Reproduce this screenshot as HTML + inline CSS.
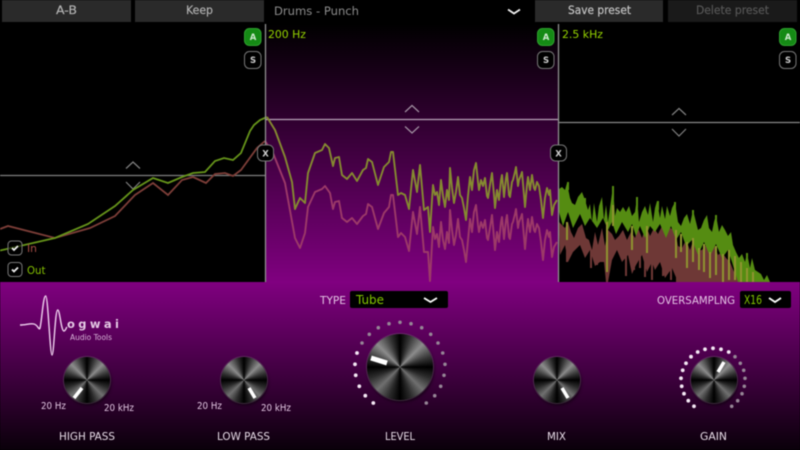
<!DOCTYPE html>
<html><head><meta charset="utf-8">
<style>
html,body{margin:0;padding:0;background:#000;width:800px;height:450px;overflow:hidden}
#w{position:relative;width:800px;height:450px;overflow:hidden;filter:blur(.5px)}
svg{position:absolute;left:0;top:0}
text{font-family:"DejaVu Sans","Liberation Sans",sans-serif}
.k{position:absolute;border-radius:50%;box-shadow:0 0 0 1px rgba(140,140,140,.3),1px 2px 3px rgba(0,0,0,.6);
background:conic-gradient(#000 0deg,#333 18deg,#8c8c8c 45deg,#333 72deg,#000 90deg,#2a2a2a 110deg,#707070 135deg,#2a2a2a 160deg,#000 180deg,#2a2a2a 200deg,#707070 225deg,#2a2a2a 250deg,#000 270deg,#333 288deg,#8c8c8c 315deg,#333 342deg,#000 360deg)}
</style></head><body><div id="w">
<svg width="800" height="450" viewBox="0 0 800 450">
<defs>
<linearGradient id="m" x1="0" y1="0" x2="0" y2="1"><stop offset="0" stop-color="#000"/><stop offset="1" stop-color="#800080"/></linearGradient>
<linearGradient id="b" x1="0" y1="0" x2="0" y2="1"><stop offset="0" stop-color="#800080"/><stop offset="1" stop-color="#0a000a"/></linearGradient>
<clipPath id="sp"><rect x="559" y="24" width="241" height="258"/></clipPath>
</defs>
<rect width="800" height="450" fill="#000"/>
<rect x="265" y="24" width="293" height="258" fill="url(#m)"/>
<rect x="0" y="282" width="800" height="168" fill="url(#b)"/>

<!-- top bar -->
<rect x="2" y="0" width="129" height="22" fill="#2a2a2a"/>
<rect x="135" y="0" width="129" height="22" fill="#2a2a2a"/>
<rect x="535" y="0" width="128" height="22" fill="#2a2a2a"/>
<rect x="668" y="0" width="129" height="22" fill="#1a1a1a"/>
<g font-size="11.500" stroke-width=".15">
<text x="56" y="14" fill="#b4b4b4" stroke="#b4b4b4" textLength="21" lengthAdjust="spacingAndGlyphs">A-B</text>
<text x="186" y="14" fill="#b4b4b4" stroke="#b4b4b4" textLength="27" lengthAdjust="spacingAndGlyphs">Keep</text>
<text x="568" y="14" fill="#c8c8c8" stroke="#c8c8c8" textLength="63" lengthAdjust="spacingAndGlyphs">Save preset</text>
<text x="696" y="14" fill="#585858" stroke="#585858" textLength="73" lengthAdjust="spacingAndGlyphs">Delete preset</text>
</g>
<text x="274" y="15" font-size="11.500" fill="#8c8c8c" textLength="85" lengthAdjust="spacingAndGlyphs">Drums - Punch</text>
<path d="M508 9.500L514 13.500L520 9.500" fill="none" stroke="#eee" stroke-width="1.800"/>

<!-- crossover + threshold lines -->
<path d="M0 175.500H265" stroke="#808080" stroke-width="1.200"/>
<path d="M265 119.500H558" stroke="#b8a4b8" stroke-width="1.200"/>
<path d="M558 122.500H800" stroke="#888" stroke-width="1.200"/>

<!-- chevrons -->
<g fill="none" stroke-width="1.200">
<path d="M126 168.500L133 162L140 168.500M126 182L133 189L140 182" stroke="#808080"/>
<path d="M405 112L412 105.500L419 112M405 126.500L412 133L419 126.500" stroke="#a090a0"/>
<path d="M672 115L679 108.500L686 115M672 129L679 136L686 129" stroke="#808080"/>
</g>

<!-- left curves -->
<path d="M0 229L8 226L55 238L90 228L115 216L135 195L153 183L168 195L182 180L193 177L206 183L215 174L225 173L233 176L241 170L257 148L265 141" fill="none" stroke="#7d3e38" stroke-width="1.800"/>
<path d="M0 250.500L55 238L88 224L115 206L133 190L153 178L168 183L182 177L193 173L205 172L215 161L224 158L233 160L241 153L250 131L254 125L260 120L267 117" fill="none" stroke="#66941a" stroke-width="1.800"/>

<!-- right spectrum -->
<g clip-path="url(#sp)">
<polygon fill="#6e3836" points="559,222 562,225 565,228 568,222 571,232 574,238 578,228 582,224 586,238 589,240 592,250 595,232 598,245 602,228 605,246 608,230 612,234 615,240 619,236 623,230 627,240 631,232 635,238 638,228 642,238 646,226 650,236 654,228 658,234 662,226 666,236 670,228 675,230 678,246 682,248 686,240 690,250 694,238 698,250 702,250 706,245 710,252 714,245 718,255 722,252 726,258 730,262 734,272 738,276 742,274 746,280 750,282 678,282 672,268 665,278 660,262 655,270 652,262 647,272 642,255 636,265 632,274 628,255 622,262 617,250 612,260 608,282 606,282 604,262 600,262 595,266 590,250 585,258 580,245 573,252 568,262 565,245 560,255 559,235"/>
<path fill="none" stroke="#6e3836" stroke-width="2" d="M567 250V262M591 250V268M597 255V265M626 250V276M634 255V270M640 250V268M645 260V277M652 255V280M663 255V276M671 262V280M677 262V282M683 262V282M690 262V282M697 260V282M704 268V282M712 268V282M721 270V282"/>
<polygon fill="#558c12" points="559,189 562,187 565,190 567,183 570,198 572,203 575,205 578,197 582,192 585,200 588,210 590,204 592,222 594,203 597,222 599,206 602,197 604,220 606,205 608,222 610,208 613,186 615,216 617,208 620,212 623,207 626,212 629,206 632,216 635,212 637,197 639,222 642,212 645,206 648,215 650,203 653,222 655,208 657,201 660,218 662,206 665,219 667,206 670,216 672,208 675,202 678,222 681,226 684,218 687,214 690,224 693,210 696,222 698,230 701,228 704,220 707,215 709,228 712,232 714,222 716,215 719,232 722,225 725,230 728,236 731,232 733,245 736,252 739,258 742,254 745,262 747,253 750,268 752,258 755,270 758,272 761,274 764,280 767,275 770,282 738,282 732,262 728,250 722,258 716,244 710,256 704,242 698,255 692,240 686,246 681,232 676,240 671,226 666,238 660,224 655,232 650,226 645,238 640,226 636,236 632,224 628,232 622,222 616,234 612,222 608,230 603,218 597,228 590,218 585,226 580,214 573,228 568,212 563,226 559,212"/>
<path fill="none" stroke="#8f9430" stroke-width="2" d="M567 222V240M607 222V272M613 205V226M632 226V250M647 226V253M676 230V258M681 234V252M687 242V268M693 238V262M699 248V270M704 244V272M710 252V278M716 246V275M723 254V282M729 250V280M735 256V280M741 262V282M747 268V282M753 272V282"/>
<path fill="none" stroke="#558c12" stroke-width="2" d="M568 182V190M585 198V206M613 186V200M637 197V208M658 201V210M675 202V212M693 210V220M716 215V225M747 253V262"/>
</g>

<!-- mid curves -->
<g fill="none" stroke-linejoin="round" stroke-width="1.900">
<path d="M265 141L273 153L285 183L295 238L300 248L305 233L308 207L315 192L322 189L325 186L330 193L333 209L335 202L339 201L342 218L347 222L352 218L357 224L363 216L366 214L368 204L372 207L378 229L384 213L389 207L391 195L393 195L398 237L401 233L405 237L409 251L413 212L417 234L420 207L424 252L428 252L430 281L432 244L433 227L435 239L437 234L439 247L441 222L443 240L445 249L447 232L449 243L450 210L452 230L454 245L456 235L458 219L460 237L462 240L464 250L466 262L468 240L470 219L472 232L474 212L476 205L478 225L479 232L481 222L483 228L485 220L487 238L488 240L490 228L492 215L494 238L495 250L497 232L499 242L501 222L502 217L504 239L506 220L507 215L509 237L510 239L512 224L513 222L515 214L516 209L518 228L519 222L521 217L522 214L524 237L525 249L527 227L528 219L530 232L532 217L534 230L535 232L537 224L539 228L541 242L543 260L545 240L547 230L549 237L550 232L552 257L554 247L557 242" stroke="#9c3a68"/>
<path d="M267 117L275 130L285 157L292 182L295 209L300 198L305 203L308 173L315 153L322 150L325 144L329 148L333 166L335 158L339 157L342 175L347 179L352 173L357 181L363 170L366 168L368 159L372 162L378 185L384 167L389 162L391 152L393 152L398 195L401 193L405 195L409 209L413 170L417 192L420 165L424 210L428 207L430 232L432 200L433 185L435 195L437 192L439 205L441 180L443 196L445 207L447 190L449 200L450 168L452 188L454 203L456 192L458 177L460 195L462 198L464 208L466 220L468 196L470 177L472 190L474 170L476 163L478 182L479 190L481 180L483 186L485 178L487 196L488 198L490 185L492 173L494 195L495 208L497 190L499 200L501 180L502 175L504 197L506 178L507 173L509 195L510 197L512 182L513 180L515 172L516 167L518 186L519 180L521 175L522 172L524 195L525 207L527 185L528 177L530 190L532 175L534 188L535 190L537 182L539 186L541 200L543 218L545 198L547 188L549 195L550 190L552 215L554 205L557 200" stroke="#858a30"/>
</g>

<!-- vertical lines -->
<path d="M265.500 24V282M558.500 24V282" stroke="#909090" stroke-width="1.300"/>

<!-- freq labels -->
<text x="268" y="38" font-size="11" fill="#96d400" textLength="38" lengthAdjust="spacingAndGlyphs">200 Hz</text>
<text x="562" y="38" font-size="11" fill="#96d400" textLength="41" lengthAdjust="spacingAndGlyphs">2.5 kHz</text>

<!-- A / S buttons -->
<g stroke-width="1" font-size="8.500" font-weight="bold" text-anchor="middle">
<rect x="244.500" y="28.500" width="16.500" height="17" rx="5" fill="#158a15" stroke="#2fa02f"/>
<rect x="244.500" y="51.500" width="16.500" height="17" rx="5" fill="#000" stroke="#777"/>
<rect x="537.500" y="28.500" width="16.500" height="17" rx="5" fill="#158a15" stroke="#2fa02f"/>
<rect x="537.500" y="51.500" width="16.500" height="17" rx="5" fill="#000" stroke="#777"/>
<rect x="779.500" y="28.500" width="16.500" height="17" rx="5" fill="#158a15" stroke="#2fa02f"/>
<rect x="779.500" y="51.500" width="16.500" height="17" rx="5" fill="#000" stroke="#777"/>
<text x="253" y="40" fill="#cfe8cf" stroke="none">A</text><text x="253" y="63" fill="#ccc" stroke="none">S</text>
<text x="546" y="40" fill="#cfe8cf" stroke="none">A</text><text x="546" y="63" fill="#ccc" stroke="none">S</text>
<text x="788" y="40" fill="#cfe8cf" stroke="none">A</text><text x="788" y="63" fill="#ccc" stroke="none">S</text>
<rect x="257.500" y="145" width="16" height="16" rx="5" fill="#000" stroke="#777"/>
<rect x="550.500" y="145" width="16" height="16" rx="5" fill="#000" stroke="#777"/>
<text x="265.500" y="156.500" fill="#ccc" stroke="none">X</text>
<text x="558.500" y="156.500" fill="#ccc" stroke="none">X</text>
</g>

<!-- checkboxes -->
<rect x="8" y="241" width="14" height="14" rx="3.500" fill="#000" fill-opacity=".6" stroke="#777"/>
<rect x="8" y="262.500" width="14" height="14" rx="3.500" fill="#000" stroke="#777"/>
<path d="M12 248L14 250L18 246M12 269.500L14 271.500L18 267.500" fill="none" stroke="#eee" stroke-width="1.800"/>
<text x="27" y="252" font-size="11" fill="#a84e46" textLength="10" lengthAdjust="spacingAndGlyphs">In</text>
<text x="27" y="274" font-size="11" fill="#84c000" textLength="18.500" lengthAdjust="spacingAndGlyphs">Out</text>

<!-- logo -->
<path d="M20 325C26 325 30 323 34 324C38 325 39 331 40 328C42 320 43 296 45.700 296C48 296 50 355 52 355C54 355 55 310 57.700 310C60 310 61 331 64 331C65.500 331 66 328 67 327" fill="none" stroke="#eed0ee" stroke-width="1.400"/>
<text x="67" y="328" font-size="11.500" font-weight="bold" fill="#e4c8e4" textLength="52" lengthAdjust="spacing">ogwai</text>
<text x="70" y="340" font-size="7.500" fill="#d8b4d8" textLength="42" lengthAdjust="spacingAndGlyphs">Audio Tools</text>

<!-- selectors -->
<rect x="350" y="291" width="98" height="17" rx="2" fill="#000"/>
<rect x="740" y="291" width="51" height="17" rx="2" fill="#000"/>
<text x="320" y="304" font-size="11" fill="#e4c4e4" textLength="26" lengthAdjust="spacingAndGlyphs">TYPE</text>
<text x="356" y="304" font-size="12" fill="#84c800" textLength="28" lengthAdjust="spacingAndGlyphs">Tube</text>
<path d="M424 298L430.500 302L437 298M769 298L775 302L781 298" fill="none" stroke="#fff" stroke-width="1.800"/>
<text x="657" y="304" font-size="11" fill="#e4c4e4" textLength="78" lengthAdjust="spacingAndGlyphs">OVERSAMPLNG</text>
<text x="744" y="304" font-size="12" fill="#84c800" textLength="18" lengthAdjust="spacingAndGlyphs">X16</text>

<!-- small labels -->
<g font-size="9.500" fill="#e0c4e0">
<text x="41" y="409" textLength="25" lengthAdjust="spacingAndGlyphs">20 Hz</text>
<text x="104" y="411" textLength="30" lengthAdjust="spacingAndGlyphs">20 kHz</text>
<text x="197" y="409" textLength="25" lengthAdjust="spacingAndGlyphs">20 Hz</text>
<text x="261" y="411" textLength="30" lengthAdjust="spacingAndGlyphs">20 kHz</text>
</g>
<g font-size="11" fill="#e8dce8">
<text x="59" y="440" textLength="56" lengthAdjust="spacingAndGlyphs">HIGH PASS</text>
<text x="217" y="440" textLength="53" lengthAdjust="spacingAndGlyphs">LOW PASS</text>
<text x="385" y="440" textLength="30" lengthAdjust="spacingAndGlyphs">LEVEL</text>
<text x="547" y="440" textLength="19" lengthAdjust="spacingAndGlyphs">MIX</text>
<text x="700" y="440" textLength="27" lengthAdjust="spacingAndGlyphs">GAIN</text>
</g>

<!-- level dots -->
<g fill="#968696">
<circle cx="400" cy="322.300" r="1.800"/><circle cx="411" cy="323.700" r="1.800"/><circle cx="421.700" cy="327.700" r="1.800"/><circle cx="430.700" cy="334.300" r="1.800"/><circle cx="438" cy="343" r="1.800"/><circle cx="442.700" cy="353" r="1.800"/><circle cx="445" cy="364.300" r="1.800"/><circle cx="444" cy="375.300" r="1.800"/><circle cx="440.700" cy="386.300" r="1.800"/><circle cx="434.700" cy="395.700" r="1.800"/><circle cx="426.300" cy="403" r="1.800"/>
<circle cx="362" cy="343" r="1.800"/><circle cx="369.300" cy="334.300" r="1.800"/><circle cx="378.300" cy="327.700" r="1.800"/><circle cx="389" cy="323.700" r="1.800"/>
<circle cx="735" cy="356.700" r="1.800"/><circle cx="740.300" cy="363.300" r="1.800"/><circle cx="743.700" cy="370.300" r="1.800"/><circle cx="745" cy="378.300" r="1.800"/><circle cx="744.300" cy="386.300" r="1.800"/><circle cx="742" cy="393.700" r="1.800"/><circle cx="737.700" cy="400.700" r="1.800"/><circle cx="731.700" cy="406.300" r="1.800"/>
</g>
<g fill="#f4e8f4">
<circle cx="373.300" cy="403" r="1.900"/><circle cx="365.300" cy="395.700" r="1.900"/><circle cx="359.300" cy="386.300" r="1.900"/><circle cx="355.700" cy="375.300" r="1.900"/><circle cx="355" cy="364.300" r="1.900"/><circle cx="357" cy="353" r="1.900"/>
<circle cx="694" cy="406.300" r="1.900"/><circle cx="688.300" cy="400.700" r="1.900"/><circle cx="684" cy="393.700" r="1.900"/><circle cx="681.700" cy="386.300" r="1.900"/><circle cx="681" cy="378.300" r="1.900"/><circle cx="682.700" cy="370.300" r="1.900"/><circle cx="686" cy="363.300" r="1.900"/><circle cx="691" cy="356.700" r="1.900"/><circle cx="697.700" cy="352" r="1.900"/><circle cx="705" cy="349.300" r="1.900"/><circle cx="713" cy="348.300" r="1.900"/><circle cx="721" cy="349.300" r="1.900"/><circle cx="728.700" cy="352" r="1.900"/>
</g>
</svg>

<div class="k" style="left:64px;top:357px;width:46px;height:46px"></div>
<div class="k" style="left:221px;top:357px;width:46px;height:46px"></div>
<div class="k" style="left:367px;top:334px;width:66px;height:66px"></div>
<div class="k" style="left:534px;top:357px;width:46px;height:46px"></div>
<div class="k" style="left:691px;top:357px;width:46px;height:46px"></div>

<svg width="800" height="450" viewBox="0 0 800 450">
<g stroke="#fff" fill="none">
<path d="M74 398L82 388" stroke-width="3.500"/>
<path d="M255 398L249 388" stroke-width="3.500"/>
<path d="M568 398L562 388" stroke-width="3.500"/>
<path d="M371 358L387 363" stroke-width="5"/>
<path d="M724 362L718 372" stroke-width="3.500"/>
</g>
</svg>
</div></body></html>
